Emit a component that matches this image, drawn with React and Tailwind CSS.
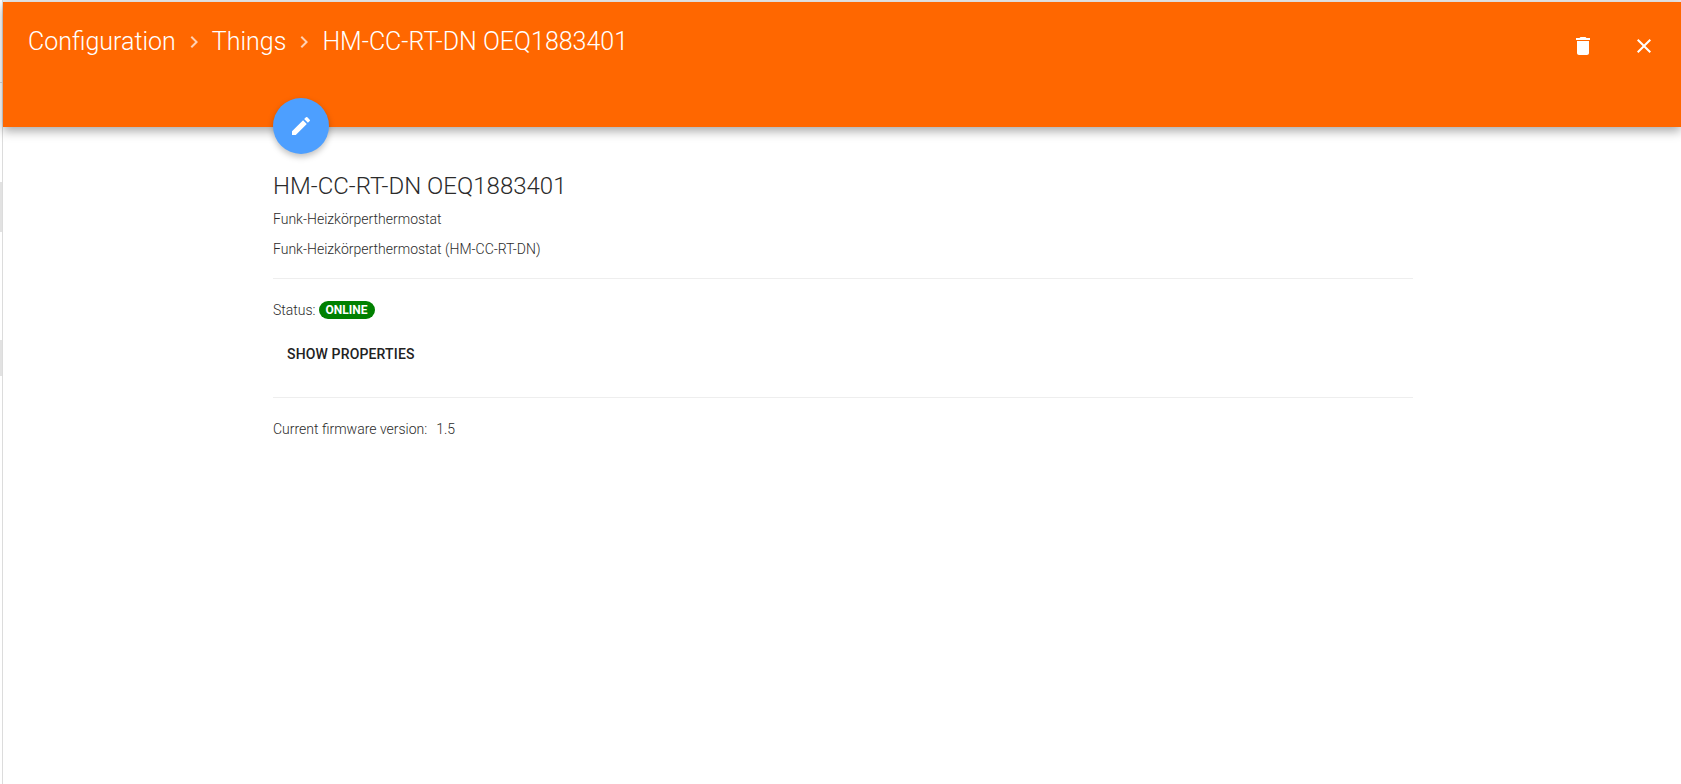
import React from "react";
import { MdChevronRight, MdClose, MdDelete, MdEdit } from "react-icons/md";

const App = () => {
  return (
    <div className="flex h-[784px] w-full overflow-hidden bg-white font-['Roboto',sans-serif]">
      {/* bits of the page behind the dialog, still visible on the left */}
      <div className="flex w-[3px] shrink-0 flex-col border-r border-[#dcdcdc]">
        <div className="mt-[82px] h-px bg-[#dcdcdc]" />
        <div className="mt-[99px] h-[50px] bg-[#e2e2e2]" />
        <div className="mt-[108px] h-[36px] bg-[#e2e2e2]" />
      </div>

      <div className="relative min-w-0 flex-1 border-t-2 border-[#ececec]">
        <header className="relative flex h-[125px] items-start justify-between bg-[#ff6700] pl-[25px] pr-[25px] pt-6 shadow-[0_4px_10px_rgba(0,0,0,0.35)]">
          <div className="flex items-center text-[25px] font-light leading-[32px] text-white">
            <span>Configuration</span>
            <MdChevronRight className="mx-[6px] text-[24px] text-white/70" />
            <span>Things</span>
            <MdChevronRight className="mx-[6px] text-[24px] text-white/70" />
            <span>HM-CC-RT-DN OEQ1883401</span>
          </div>
          <div className="flex items-center gap-[37px] pt-2 text-white">
            <MdDelete className="text-[24px]" />
            <MdClose className="text-[24px]" />
          </div>
        </header>

        <button className="absolute left-[270px] top-[96px] flex h-14 w-14 items-center justify-center rounded-full bg-[#4d9fff] text-white shadow-[0_3px_6px_rgba(0,0,0,0.25)]">
          <MdEdit className="text-[24px]" />
        </button>

        <main className="ml-[270px] w-[1140px] pt-[43px] text-[#2b2b2b]">
          <h1 className="text-2xl font-light leading-[32px]">HM-CC-RT-DN OEQ1883401</h1>
          <p className="mt-[7px] text-sm font-light leading-[20px]">Funk-Heizkörperthermostat</p>
          <p className="mt-[10px] text-sm font-light leading-[20px]">Funk-Heizkörperthermostat (HM-CC-RT-DN)</p>
          <hr className="mt-[19px] border-[#eeeeee]" />
          <div className="mt-[21px] flex items-center text-sm font-light leading-[20px]">
            <span>Status:</span>
            <span className="ml-[3px] flex h-[18px] items-center rounded-full bg-[#008000] px-[7px] text-xs font-bold text-white">ONLINE</span>
          </div>
          <button className="mt-4 block px-[14px] text-sm font-medium leading-[36px] tracking-[0.15px] text-[#222]">SHOW PROPERTIES</button>
          <hr className="mt-[25px] border-[#eeeeee]" />
          <p className="mt-[21px] text-sm font-light leading-[20px]">
            Current firmware version:<span className="ml-[9px]">1.5</span>
          </p>
        </main>
      </div>
    </div>
  );
};

export default App;
